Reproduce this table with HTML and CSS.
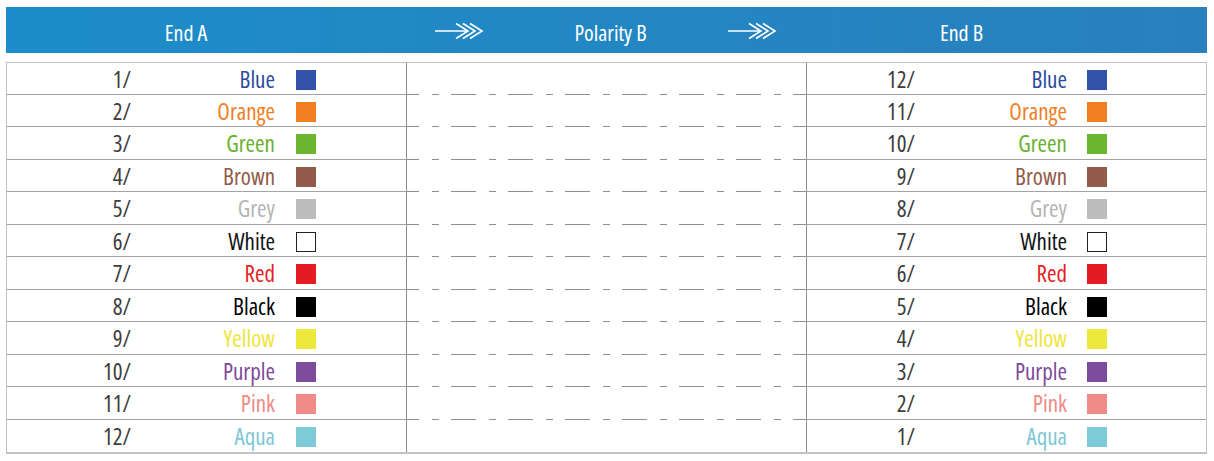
FILE: index.html
```html
<!DOCTYPE html>
<html lang="en">
<head>
<meta charset="utf-8">
<title>Polarity B</title>
<link rel="stylesheet" href="styles.css">
</head>
<body>
<div class="sheet">
  <div class="header">
    <div class="h-cell">End A</div>
    <div class="h-cell"><svg class="arrow" viewBox="0 0 50 18" width="50" height="18"><path d="M0 9H33M21 1.5L33 9L21 16.5M28 1.5L40 9L28 16.5M35 1.5L47 9L35 16.5" fill="none" stroke="#fff" stroke-width="1.6"/></svg></div>
    <div class="h-cell">Polarity B</div>
    <div class="h-cell"><svg class="arrow" viewBox="0 0 50 18" width="50" height="18"><path d="M0 9H33M21 1.5L33 9L21 16.5M28 1.5L40 9L28 16.5M35 1.5L47 9L35 16.5" fill="none" stroke="#fff" stroke-width="1.6"/></svg></div>
    <div class="h-cell">End B</div>
    <div class="h-cell"></div>
  </div>

  <div class="table">
    <div class="end end-a"><span class="num">1/</span><span class="name c-blue">Blue</span><span class="swatch s-blue"></span></div>
    <div class="mid"></div>
    <div class="end end-b"><span class="num">12/</span><span class="name c-blue">Blue</span><span class="swatch s-blue"></span></div>

    <div class="end end-a"><span class="num">2/</span><span class="name c-orange">Orange</span><span class="swatch s-orange"></span></div>
    <div class="mid"></div>
    <div class="end end-b"><span class="num">11/</span><span class="name c-orange">Orange</span><span class="swatch s-orange"></span></div>

    <div class="end end-a"><span class="num">3/</span><span class="name c-green">Green</span><span class="swatch s-green"></span></div>
    <div class="mid"></div>
    <div class="end end-b"><span class="num">10/</span><span class="name c-green">Green</span><span class="swatch s-green"></span></div>

    <div class="end end-a"><span class="num">4/</span><span class="name c-brown">Brown</span><span class="swatch s-brown"></span></div>
    <div class="mid"></div>
    <div class="end end-b"><span class="num">9/</span><span class="name c-brown">Brown</span><span class="swatch s-brown"></span></div>

    <div class="end end-a"><span class="num">5/</span><span class="name c-grey">Grey</span><span class="swatch s-grey"></span></div>
    <div class="mid"></div>
    <div class="end end-b"><span class="num">8/</span><span class="name c-grey">Grey</span><span class="swatch s-grey"></span></div>

    <div class="end end-a"><span class="num">6/</span><span class="name c-white">White</span><span class="swatch s-white"></span></div>
    <div class="mid"></div>
    <div class="end end-b"><span class="num">7/</span><span class="name c-white">White</span><span class="swatch s-white"></span></div>

    <div class="end end-a"><span class="num">7/</span><span class="name c-red">Red</span><span class="swatch s-red"></span></div>
    <div class="mid"></div>
    <div class="end end-b"><span class="num">6/</span><span class="name c-red">Red</span><span class="swatch s-red"></span></div>

    <div class="end end-a"><span class="num">8/</span><span class="name c-black">Black</span><span class="swatch s-black"></span></div>
    <div class="mid"></div>
    <div class="end end-b"><span class="num">5/</span><span class="name c-black">Black</span><span class="swatch s-black"></span></div>

    <div class="end end-a"><span class="num">9/</span><span class="name c-yellow">Yellow</span><span class="swatch s-yellow"></span></div>
    <div class="mid"></div>
    <div class="end end-b"><span class="num">4/</span><span class="name c-yellow">Yellow</span><span class="swatch s-yellow"></span></div>

    <div class="end end-a"><span class="num">10/</span><span class="name c-purple">Purple</span><span class="swatch s-purple"></span></div>
    <div class="mid"></div>
    <div class="end end-b"><span class="num">3/</span><span class="name c-purple">Purple</span><span class="swatch s-purple"></span></div>

    <div class="end end-a"><span class="num">11/</span><span class="name c-pink">Pink</span><span class="swatch s-pink"></span></div>
    <div class="mid"></div>
    <div class="end end-b"><span class="num">2/</span><span class="name c-pink">Pink</span><span class="swatch s-pink"></span></div>

    <div class="end end-a last"><span class="num">12/</span><span class="name c-aqua">Aqua</span><span class="swatch s-aqua"></span></div>
    <div class="mid last"></div>
    <div class="end end-b last"><span class="num">1/</span><span class="name c-aqua">Aqua</span><span class="swatch s-aqua"></span></div>
  </div>
</div>
</body>
</html>
```

FILE: styles.css
```css
html, body {
  margin: 0;
  padding: 0;
  background: #fff;
}

body {
  font-family: "Open Sans", "Liberation Sans", sans-serif;
  font-stretch: 75%;
  color: #3a3a3a;
}

.sheet {
  padding: 7px 7px 0 6px;
}

.header {
  display: grid;
  grid-template-columns: 360px 188px 113px 172px 245px 1fr;
  height: 46px;
  background: linear-gradient(to right, #1c8dca, #2980bd);
  color: #fff;
  font-size: 22px;
}

.h-cell {
  display: flex;
  align-items: center;
  justify-content: center;
  padding-top: 3px;
}

.arrow {
  display: block;
  margin-top: -2px;
}

.table {
  margin-top: 9px;
  display: grid;
  grid-template-columns: 400px 399px 400px;
  grid-template-rows: 31.5px repeat(11, 32.5px);
  border: 1px solid #c2c2c2;
  border-bottom-width: 2px;
  width: 1199px;
}

.end {
  display: grid;
  align-items: center;
  border-bottom: 1px solid #a3a3a3;
  font-size: 23px;
  white-space: nowrap;
  padding-bottom: 2px;
  box-sizing: border-box;
}

.end.last {
  border-bottom: none;
}

.end-a {
  grid-template-columns: 124px 144px auto;
  border-right: 1px solid #8e8e8e;
}

.end-b {
  grid-template-columns: 108px 152px auto;
  border-left: 1px solid #8e8e8e;
}

.num {
  text-align: right;
  color: #3d3d3d;
}

.name {
  text-align: right;
}

.swatch {
  width: 20px;
  height: 20px;
  box-sizing: border-box;
  margin-left: 21px;
  margin-top: 2px;
}

.end-b .swatch {
  margin-left: 20px;
}

.mid {
  background-image: linear-gradient(to right, #8f8f8f 0 25px, transparent 25px 38px, #8f8f8f 38px 45px, transparent 45px 57px);
  background-size: 57px 1px;
  background-repeat: repeat-x;
  background-position: -13px 100%;
}

.mid.last {
  background: none;
}

.c-blue { color: #2d4b9d; }
.c-orange { color: #ee7f26; }
.c-green { color: #67b12e; }
.c-brown { color: #8f5a47; }
.c-grey { color: #b4b4b4; }
.c-white { color: #111; }
.c-red { color: #e31d24; }
.c-black { color: #000; }
.c-yellow { color: #ede53a; }
.c-purple { color: #7b4a9b; }
.c-pink { color: #ee8a85; }
.c-aqua { color: #7cc8d6; }

.s-blue { background: #3251a8; }
.s-orange { background: #f07f22; }
.s-green { background: #6cb52f; }
.s-brown { background: #925b4a; }
.s-grey { background: #bcbcbc; }
.s-white { background: #fff; border: 1px solid #222; }
.s-red { background: #e41b22; }
.s-black { background: #000; }
.s-yellow { background: #ede93a; }
.s-purple { background: #7d4c9d; }
.s-pink { background: #f08a86; }
.s-aqua { background: #7dcad8; }
```
